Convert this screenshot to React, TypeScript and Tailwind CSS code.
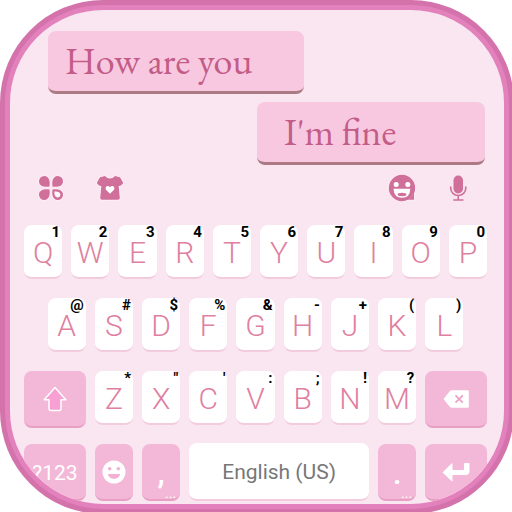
import React from "react";

type KeyDef = { letter: string; hint: string };

const toKeys = (letters: string, hints: string): KeyDef[] =>
  letters.split("").map((letter, i) => ({ letter, hint: hints[i] }));

const ROW_ONE = toKeys("QWERTYUIOP", "1234567890");
const ROW_TWO = toKeys("ASDFGHJKL", "@#$%&-+()");
const ROW_THREE = toKeys("ZXCVBNM", "*\"':;!?");

const PINK_KEY =
  "flex h-[57px] items-center justify-center rounded-lg border-b-2 border-[#e79fc3] bg-[#f3b7d7] text-white";

function LetterKey({ letter, hint }: KeyDef) {
  return (
    <button
      type="button"
      className="relative col-span-2 flex h-[54px] items-center justify-center rounded-lg border-b-2 border-[#f2cbdd] bg-white text-[30px] leading-none font-light text-[#e0809f]"
    >
      <span className="pt-1">{letter}</span>
      <span className="absolute -top-px right-0.5 text-[15px] leading-4 font-bold text-black">{hint}</span>
    </button>
  );
}

function PunctuationKey({ mark }: { mark: string }) {
  return (
    <button type="button" className={`${PINK_KEY} relative col-span-2 text-[32px]`}>
      <span className="pt-0.5 font-medium">{mark}</span>
      <span className="absolute right-1 bottom-0 text-sm leading-3">...</span>
    </button>
  );
}

function Bubble({ children, side }: { children: React.ReactNode; side: "left" | "right" }) {
  const place = side === "left" ? "w-64 self-start pl-[17px]" : "w-[228px] self-end pl-[27px]";
  return (
    <p
      className={`${place} h-[63px] rounded-lg border-b-3 border-[#ab7a84] bg-[#f8c8e1] font-['EB_Garamond','Liberation_Serif',serif] text-[38px] leading-[60px] text-[#c35c86]`}
    >
      {children}
    </p>
  );
}

function MenuIcon() {
  return (
    <svg viewBox="0 0 26 26" className="size-[26px]" fill="#d0709a" aria-hidden="true">
      <g stroke="#fff6fa" strokeWidth="1.200" paintOrder="stroke">
        <path d="M11.500 11.500C8 12.200 1 12 1 6.200A5.200 5.200 0 0 1 6.200 1C12 1 12.200 8 11.500 11.500Z" />
        <path d="M14.500 11.500C18 12.200 25 12 25 6.200A5.200 5.200 0 0 0 19.800 1C14 1 13.800 8 14.500 11.500Z" />
        <path d="M11.500 14.500C8 13.800 1 14 1 19.800A5.200 5.200 0 0 0 6.200 25C12 25 12.200 18 11.500 14.500Z" />
        <path d="M14.500 14.500C18 13.800 25 14 25 19.800A5.200 5.200 0 0 1 19.800 25C14 25 13.800 18 14.500 14.500Z" />
      </g>
      <path d="M16.500 16.500C19 16 22.500 17 22.500 19.800A2.900 2.900 0 0 1 19.800 22.500C17 22.500 16 19 16.500 16.500Z" fill="#fff6fa" />
    </svg>
  );
}

function ShirtIcon() {
  return (
    <svg viewBox="0 0 28 26" className="h-[26px] w-7" aria-hidden="true">
      <path
        d="M9 1Q14 6 19 1L23 2Q24 2.200 24.500 3L27 7.500Q27.300 8.300 26.500 9L24.500 10.800L22.700 11L23.800 23Q23.800 24.800 22 24.800H6Q4.200 24.800 4.200 23L5.300 11L3.500 10.800L1.500 9Q0.700 8.300 1 7.500L3.500 3Q4 2.200 5 2Z"
        fill="#d0709a"
        stroke="#fff6fa"
        strokeWidth="1.200"
        paintOrder="stroke"
        strokeLinejoin="round"
      />
      <path d="M14 18.800L10.200 15C8.200 12.300 11.800 9.300 14 12.300C16.200 9.300 19.800 12.300 17.800 15Z" fill="#fff" />
    </svg>
  );
}

function StickerIcon() {
  return (
    <svg viewBox="0 0 28 28" className="size-7" aria-hidden="true">
      <path
        d="M14 0.800A13.200 13.200 0 1 0 14 27.200Q17.500 27.200 20 25.800H26V19.500Q27.200 17 27.200 14A13.200 13.200 0 0 0 14 0.800Z"
        fill="#d0709a"
        stroke="#fff6fa"
        strokeWidth="1"
        paintOrder="stroke"
      />
      <path d="M20.500 25.300Q23.500 23.500 25.800 19.500" fill="none" stroke="#e090b5" strokeWidth="0.500" />
      <circle cx="8.200" cy="10.500" r="2.500" fill="#fff" />
      <circle cx="19.800" cy="10.500" r="2.500" fill="#fff" />
      <path d="M5.500 14.700H22.300Q22 23.700 14 23.700Q6 23.700 5.500 14.700Z" fill="#fff" />
      <ellipse cx="14" cy="20.500" rx="4.500" ry="1.700" fill="#d0709a" />
    </svg>
  );
}

function MicIcon() {
  return (
    <svg viewBox="0 0 20 28" className="h-7 w-5" fill="none" stroke="#d0709a" aria-hidden="true">
      <rect x="5.500" y="1.500" width="9.500" height="18" rx="4.700" fill="#d0709a" stroke="none" />
      <path d="M2.700 12.500V14A7.500 7.500 0 0 0 17.800 14V12.500M10.200 22V26M5.200 26H15.500" strokeWidth="1.600" />
    </svg>
  );
}

function ShiftIcon() {
  return (
    <svg viewBox="0 0 24 26" className="h-[26px] w-6" aria-hidden="true">
      <path
        d="M12 1.500L22.800 13.800H18V22.500Q18 24.500 16 24.500H8Q6 24.500 6 22.500V13.800H1.200Z"
        fill="#f89fd3"
        stroke="#fff"
        strokeWidth="1.500"
        strokeLinejoin="round"
      />
    </svg>
  );
}

function SmileIcon() {
  return (
    <svg viewBox="0 0 24 24" className="size-6" aria-hidden="true">
      <circle cx="12" cy="12" r="11.500" fill="#fff" />
      <circle cx="7.700" cy="8.700" r="1.800" fill="#f3b0d3" />
      <circle cx="16.300" cy="8.700" r="1.800" fill="#f3b0d3" />
      <path d="M5.800 14H18.200Q17 18.800 12 18.800Q7 18.800 5.800 14Z" fill="#f3b0d3" />
    </svg>
  );
}

function DeleteIcon() {
  return (
    <svg viewBox="0 0 26 18" className="h-[18px] w-[26px]" aria-hidden="true">
      <path d="M8.500 0.200H24.800Q25.800 0.200 25.800 1.200V16.800Q25.800 17.800 24.800 17.800H8.500Q7.500 17.800 6.500 16.500L0.500 9L6.500 1.500Q7.500 0.200 8.500 0.200Z" fill="#fff" />
      <path d="M12.500 5.300L19.800 12.700M19.800 5.300L12.500 12.700" stroke="#eda3c8" strokeWidth="1.800" />
    </svg>
  );
}

function EnterIcon() {
  return (
    <svg viewBox="0 0 28 20" className="h-5 w-7" aria-hidden="true">
      <path d="M0.500 10.500L9.500 1.500Q10.500 0.800 10.500 2V8H21Q22 8 22 7V2Q22 1 23 1H26.500Q27.500 1 27.500 2V9Q27.500 13 23.500 13H10.500V18.500Q10.500 20 9.500 19Z" fill="#fff" />
    </svg>
  );
}

export default function App() {
  return (
    <main className="overflow-hidden bg-white font-[Roboto,sans-serif]">
      <div className="-mr-0.5 -mb-0.5 rounded-[103px] bg-[#d472ac] p-[5px]">
        <div className="overflow-hidden rounded-[98px] border-5 border-[#e381bd] bg-[#f9e6f1]">
          <section aria-label="Conversation" className="flex flex-col gap-2 pt-[21px] pr-[19px] pl-[38px]">
            <Bubble side="left">How are you</Bubble>
            <Bubble side="right">I'm fine</Bubble>
          </section>

          <section aria-label="Keyboard" className="flex flex-col gap-[19px] pr-[17px] pb-[3px] pl-[14px]">
            <div className="mt-[9px] mb-1 flex h-7 items-center gap-8 pr-[19px] pl-[14px]">
              <button type="button" aria-label="Menu"><MenuIcon /></button>
              <button type="button" aria-label="Themes"><ShirtIcon /></button>
              <button type="button" aria-label="Stickers" className="ml-auto"><StickerIcon /></button>
              <button type="button" aria-label="Voice input"><MicIcon /></button>
            </div>
            <div className="grid grid-cols-20 gap-x-[9px]">
              {ROW_ONE.map((k) => <LetterKey key={k.letter} {...k} />)}
            </div>
            <div className="grid grid-cols-20 gap-x-[9px]">
              <span />
              {ROW_TWO.map((k) => <LetterKey key={k.letter} {...k} />)}
            </div>
            <div className="grid grid-cols-20 gap-x-[9px] gap-y-[15px]">
              <button type="button" aria-label="Shift" className={`${PINK_KEY} col-span-3`}><ShiftIcon /></button>
              {ROW_THREE.map((k) => <LetterKey key={k.letter} {...k} />)}
              <button type="button" aria-label="Delete" className={`${PINK_KEY} col-span-3`}><DeleteIcon /></button>
              <div className="col-span-20 grid grid-cols-20 items-end gap-x-[9px]">
                <button type="button" className={`${PINK_KEY} col-span-3 pt-1 text-[21px]`}>?123</button>
                <button type="button" aria-label="Emoji" className={`${PINK_KEY} col-span-2`}><SmileIcon /></button>
                <PunctuationKey mark="," />
                <button
                  type="button"
                  className="col-span-8 h-[58px] rounded-lg border-b-2 border-[#f2cbdd] bg-white pt-1 text-[21px] text-[#777777]"
                >
                  English (US)
                </button>
                <PunctuationKey mark="." />
                <button type="button" aria-label="Enter" className={`${PINK_KEY} col-span-3`}><EnterIcon /></button>
              </div>
            </div>
          </section>
        </div>
      </div>
    </main>
  );
}
